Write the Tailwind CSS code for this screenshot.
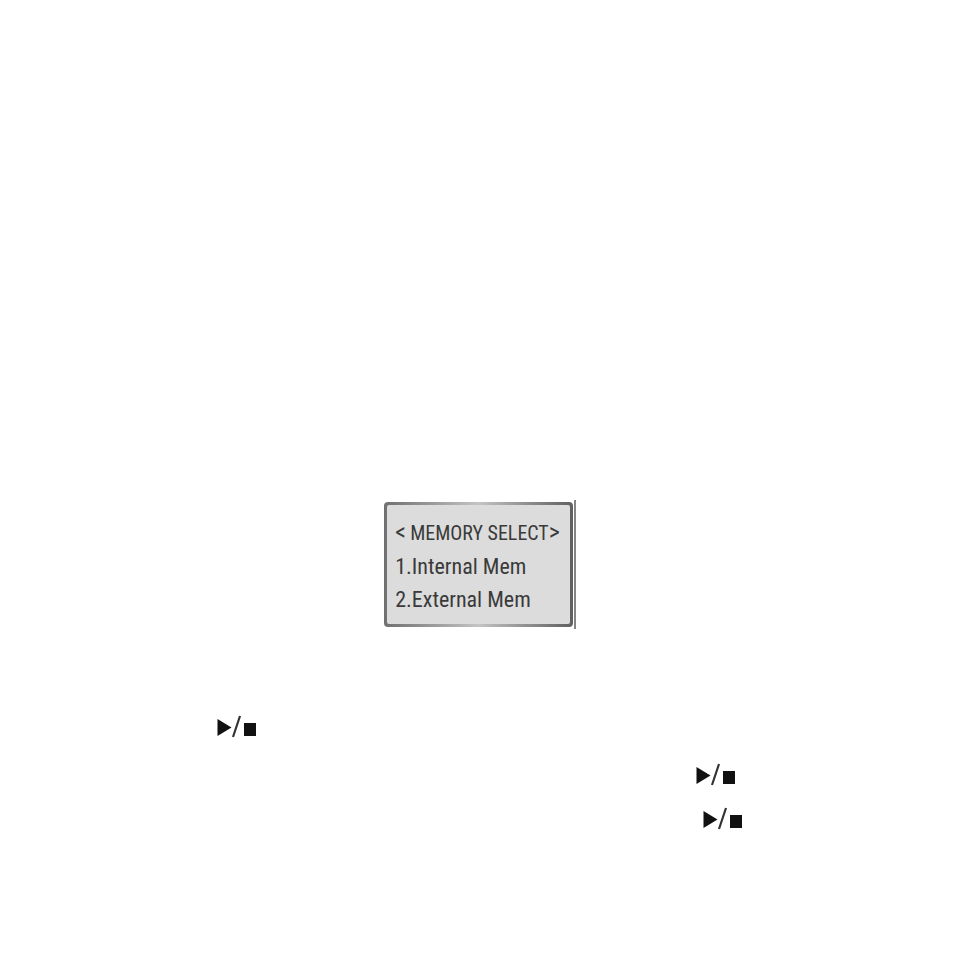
<!DOCTYPE html>
<html lang="en">
<head>
    <meta charset="UTF-8">
    <meta name="viewport" content="width=device-width, initial-scale=1.0">
    <title>Memory Select</title>
    <script src="https://cdn.jsdelivr.net/npm/@tailwindcss/browser@4"></script>
</head>
<body class="bg-white min-h-screen">
    <svg class="hidden">
        <symbol id="play-stop" viewBox="0 0 42 24">
            <path d="M1.500 4v17l14-8.500z" fill="#111"/>
            <path d="M17 22L24 1" stroke="#333" stroke-width="2.200" fill="none"/>
            <path d="M28 8h12v13H28z" fill="#111"/>
        </symbol>
    </svg>

    <main class="pt-[500px]">
        <!-- LCD panel -->
        <section class="w-fit mx-auto translate-x-[3px] flex border-r-2 border-[#858585] pr-px py-[2px]">
            <div class="rounded bg-linear-to-r from-[#707070] via-[#c4c4c4] to-[#606060] p-[3px]">
                <div class="rounded-xs bg-[#dcdcdc] pl-2 pr-[10px] pt-3 pb-2 text-[#3a3a3a] whitespace-nowrap font-['Roboto_Condensed','Liberation_Sans_Narrow','Liberation_Sans',sans-serif]">
                    <h1 class="flex text-[20px] leading-[34px]">
                        <span class="w-[15px] text-[24px] leading-[30px]">&lt;</span>
                        <span class="leading-[33px]">MEMORY SELECT</span>
                        <span class="text-[24px] leading-[30px]">&gt;</span>
                    </h1>
                    <p class="text-[22px] leading-[33px]">1.Internal Mem</p>
                    <p class="text-[22px] leading-[33px]">2.External Mem</p>
                </div>
            </div>
        </section>

        <!-- play/stop keys -->
        <div class="pt-[86px] pl-[216px]">
            <svg class="w-[42px] h-6" role="img" aria-label="Play/Stop"><use href="#play-stop"/></svg>
        </div>
        <div class="pt-6 pl-[695px]">
            <svg class="w-[42px] h-6" role="img" aria-label="Play/Stop"><use href="#play-stop"/></svg>
        </div>
        <div class="pt-5 pl-[702px]">
            <svg class="w-[42px] h-6" role="img" aria-label="Play/Stop"><use href="#play-stop"/></svg>
        </div>
    </main>
</body>
</html>
